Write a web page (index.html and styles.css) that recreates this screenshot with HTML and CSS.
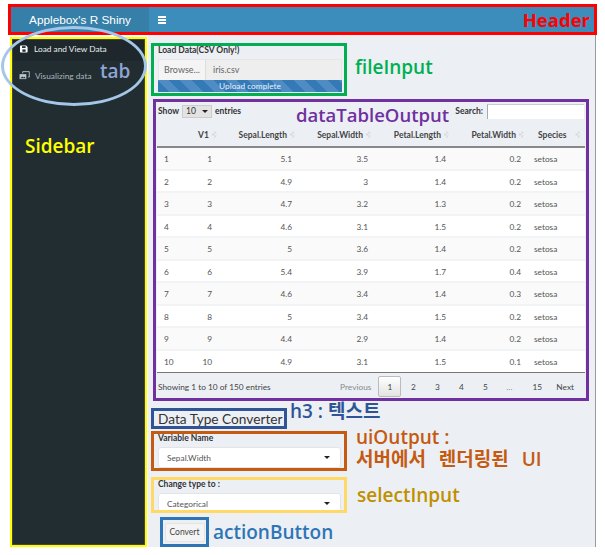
FILE: index.html
```html
<!DOCTYPE html>
<html lang="en">
<head>
    <meta charset="UTF-8">
    <title>Applebox's R Shiny</title>
    <link rel="stylesheet" href="styles.css">
</head>
<body>
    <div class="frame">
        <!-- Header -->
        <header class="header">
            <div class="logo">Applebox's R Shiny</div>
            <div class="toggle"><span></span><span></span><span></span></div>
            <div class="note note-header">Header</div>
        </header>

        <div class="columns">
            <!-- Sidebar -->
            <aside class="sidebar">
                <a class="tab tab-active">
                    <svg class="tab-icon" viewBox="0 0 10 10"><path d="M1 0.5h6.6l1.900 1.900v6.100a1 1 0 0 1-1 1h-7.500a1 1 0 0 1-1-1v-7a1 1 0 0 1 1-1z" fill="#fff"/><rect x="2.500" y="1.500" width="4.500" height="2.200" fill="#222d32"/><rect x="3" y="5.500" width="4" height="3" fill="#222d32"/></svg>
                    Load and View Data
                </a>
                <a class="tab tab-dim">
                    <svg class="tab-icon tab-icon-wide" viewBox="0 0 12 10"><path d="M4 0.700h7.300v6h-1.300M4 0.700v2" fill="none" stroke="#b8c7ce" stroke-width="1"/><rect x="0.500" y="3.500" width="7.500" height="5.500" fill="#b8c7ce"/><path d="M1.500 8l2-2 1.500 1.200 1.200-.8 1 1.600z" fill="#222d32"/></svg>
                    Visualizing data
                </a>
                <div class="note note-sidebar">Sidebar</div>
                <div class="tab-ring"></div>
                <div class="note note-tab">tab</div>
            </aside>

            <!-- Main content -->
            <main class="content">
                <div class="with-note">
                    <section class="box box-file">
                        <label class="field-label">Load Data(CSV Only!)</label>
                        <div class="file-group">
                            <span class="browse">Browse...</span>
                            <span class="file-name">iris.csv</span>
                        </div>
                        <div class="progress">Upload complete</div>
                    </section>
                    <div class="note note-file">fileInput</div>
                </div>

                <section class="box box-table">
                    <div class="note note-table">dataTableOutput</div>
                    <div class="table-top">
                        <div class="length">Show <span class="length-select">10<i class="caret caret-small"></i></span> entries</div>
                        <div class="search">Search: <span class="search-input"></span></div>
                    </div>
                    <table class="data">
                        <colgroup>
                            <col class="c-row"><col class="c-v1"><col class="c-sl"><col class="c-sw"><col class="c-pl"><col class="c-pw"><col class="c-sp">
                        </colgroup>
                        <thead>
                            <tr>
                                <th></th>
                                <th>V1<i class="sort"></i></th>
                                <th>Sepal.Length<i class="sort"></i></th>
                                <th>Sepal.Width<i class="sort"></i></th>
                                <th>Petal.Length<i class="sort"></i></th>
                                <th>Petal.Width<i class="sort"></i></th>
                                <th class="species">Species<i class="sort sort-far"></i></th>
                            </tr>
                        </thead>
                        <tbody>
                            <tr><td>1</td><td>1</td><td>5.1</td><td>3.5</td><td>1.4</td><td>0.2</td><td>setosa</td></tr>
                            <tr><td>2</td><td>2</td><td>4.9</td><td>3</td><td>1.4</td><td>0.2</td><td>setosa</td></tr>
                            <tr><td>3</td><td>3</td><td>4.7</td><td>3.2</td><td>1.3</td><td>0.2</td><td>setosa</td></tr>
                            <tr><td>4</td><td>4</td><td>4.6</td><td>3.1</td><td>1.5</td><td>0.2</td><td>setosa</td></tr>
                            <tr><td>5</td><td>5</td><td>5</td><td>3.6</td><td>1.4</td><td>0.2</td><td>setosa</td></tr>
                            <tr><td>6</td><td>6</td><td>5.4</td><td>3.9</td><td>1.7</td><td>0.4</td><td>setosa</td></tr>
                            <tr><td>7</td><td>7</td><td>4.6</td><td>3.4</td><td>1.4</td><td>0.3</td><td>setosa</td></tr>
                            <tr><td>8</td><td>8</td><td>5</td><td>3.4</td><td>1.5</td><td>0.2</td><td>setosa</td></tr>
                            <tr><td>9</td><td>9</td><td>4.4</td><td>2.9</td><td>1.4</td><td>0.2</td><td>setosa</td></tr>
                            <tr><td>10</td><td>10</td><td>4.9</td><td>3.1</td><td>1.5</td><td>0.1</td><td>setosa</td></tr>
                        </tbody>
                    </table>
                    <div class="table-bottom">
                        <div class="info">Showing 1 to 10 of 150 entries</div>
                        <div class="pager">
                            <span class="page page-text page-dim">Previous</span>
                            <span class="page page-current">1</span>
                            <span class="page">2</span>
                            <span class="page">3</span>
                            <span class="page">4</span>
                            <span class="page">5</span>
                            <span class="page page-dim">…</span>
                            <span class="page page-last">15</span>
                            <span class="page page-text">Next</span>
                        </div>
                    </div>
                </section>

                <div class="with-note with-note-h3">
                    <h3 class="box box-h3">Data Type Converter</h3>
                    <div class="note note-h3">h3 : 텍스트</div>
                </div>

                <div class="with-note with-note-ui">
                    <section class="box box-ui">
                        <label class="field-label">Variable Name</label>
                        <div class="select">Sepal.Width<i class="caret"></i></div>
                    </section>
                    <div class="note-ui">
                        <div class="note">uiOutput :</div>
                        <div class="note note-ui-ko">서버에서 렌더링된 UI</div>
                    </div>
                </div>

                <div class="with-note with-note-select">
                    <section class="box box-select">
                        <label class="field-label">Change type to :</label>
                        <div class="select">Categorical<i class="caret"></i></div>
                    </section>
                    <div class="note note-select">selectInput</div>
                </div>

                <div class="with-note with-note-action">
                    <div class="box box-action"><button class="convert">Convert</button></div>
                    <div class="note note-action">actionButton</div>
                </div>
            </main>
        </div>
    </div>
</body>
</html>
```

FILE: styles.css
```css
body {
    margin: 0;
    background-color: #fff;
    font-family: Lato, "Noto Sans CJK KR", sans-serif;
    color: #444;
}
.frame {
    width: 589px;
    margin: 4px 0 0 8px;
}

/* Header */
.header {
    display: flex;
    align-items: center;
    box-sizing: border-box;
    height: 31px;
    border: 3px solid #f00;
    background-color: #3c8dbc;
}
.logo {
    width: 138px;
    height: 100%;
    line-height: 26px;
    text-align: center;
    font-family: "Liberation Sans", sans-serif;
    font-size: 11.800px;
    color: #fff;
    background-color: #367fa9;
}
.toggle {
    display: flex;
    flex-direction: column;
    gap: 1px;
    width: 8px;
    margin-left: 9px;
}
.toggle span {
    height: 2px;
    background-color: #fff;
}

.note {
    font-family: "Open Sans", "Noto Sans CJK KR", sans-serif;
    font-weight: 600;
    font-size: 19px;
    line-height: 22px;
    white-space: nowrap;
}
.note-header {
    margin-left: auto;
    margin-right: 4px;
    color: #f00;
    font-weight: 700;
    font-size: 18.500px;
}

.columns {
    display: flex;
}

/* Sidebar */
.sidebar {
    position: relative;
    box-sizing: border-box;
    width: 137px;
    height: 510px;
    margin: 2px 1px 0 2px;
    border: 3px solid #ff0;
    outline: 1px solid #444;
    outline-offset: -3px;
    background-color: #222d32;
}
.tab {
    display: flex;
    align-items: center;
    gap: 5px;
    font-size: 8.300px;
    color: #e8eef0;
}
.tab-active {
    box-sizing: border-box;
    height: 21px;
    padding: 0 0 3px 7px;
    gap: 6px;
    background-color: #1e282c;
}
.tab-dim {
    height: 29px;
    padding-left: 6px;
    color: #a9b7bd;
}
.tab-icon {
    width: 8px;
    height: 8px;
}
.tab-icon-wide {
    width: 11px;
    height: 9px;
}
.tab-ring {
    position: absolute;
    left: -12px;
    top: -14px;
    width: 146px;
    height: 80px;
    box-sizing: border-box;
    border: 3px solid #a4c6e8;
    border-radius: 50%;
}
.note-tab {
    position: absolute;
    left: 87px;
    top: 20px;
    color: #8ea6d6;
}
.note-sidebar {
    margin: 45px 0 0 12px;
    color: #ff0;
}

/* Main content */
.content {
    box-sizing: border-box;
    width: 448px;
    height: 512px;
    padding: 8px 0 0 3px;
    background-color: #ecf0f5;
    border-right: 1px solid #999;
}
.with-note {
    display: flex;
}
.box {
    box-sizing: border-box;
    border: 3px solid;
}
.field-label {
    display: block;
    font-weight: 700;
    font-size: 8.500px;
    line-height: 8px;
    color: #333;
}

/* fileInput */
.box-file {
    width: 196px;
    height: 53px;
    padding: 0 2px 0 4px;
    border-color: #00b050;
}
.file-group {
    display: flex;
    box-sizing: border-box;
    height: 21px;
    margin-top: 5px;
    line-height: 20px;
    font-size: 9px;
    color: #666;
    border: 1px solid #e6e6e6;
    border-bottom: 0;
}
.browse {
    width: 46px;
    text-align: center;
    background-color: #f4f4f4;
    border-right: 1px solid #ddd;
}
.file-name {
    flex: 1;
    padding-left: 7px;
    background-color: #eeeeee;
}
.progress {
    height: 12px;
    line-height: 12px;
    text-align: center;
    font-size: 8.300px;
    color: #e8f0f8;
    background: repeating-linear-gradient(45deg, #337ab7 0 8px, #4f8cc4 8px 16px);
}
.note-file {
    margin: 13px 0 0 8px;
    color: #00b050;
}

/* dataTableOutput */
.box-table {
    position: relative;
    width: 436px;
    height: 302px;
    margin: 3px 0 0 2px;
    padding: 0 2px 0 1px;
    border-color: #7030a0;
    font-size: 8.300px;
}
.note-table {
    position: absolute;
    left: 140px;
    top: 2px;
    color: #7030a0;
    font-size: 18.500px;
}
.table-top {
    display: flex;
    justify-content: space-between;
    align-items: center;
    height: 18px;
    font-size: 8.500px;
    font-weight: 700;
    color: #333;
}
.length {
    display: flex;
    align-items: center;
    gap: 3px;
    padding-left: 1px;
}
.length-select {
    display: flex;
    align-items: center;
    justify-content: space-between;
    box-sizing: border-box;
    width: 30px;
    height: 13px;
    padding: 0 3px;
    font-weight: 400;
    background-color: #e3e3e3;
    border: 1px solid #ccc;
}
.search {
    display: flex;
    align-items: center;
    gap: 4px;
}
.search-input {
    width: 96px;
    height: 14px;
    background-color: #fff;
    border-left: 1px solid #aaa;
    border-top: 1px solid #ccc;
}
.caret {
    display: inline-block;
    border-left: 3.500px solid transparent;
    border-right: 3.500px solid transparent;
    border-top: 3.500px solid #222;
}
.caret-small {
    border-left-width: 3px;
    border-right-width: 3px;
    border-top-width: 3px;
}
.data {
    width: 428px;
    margin-top: 3px;
    table-layout: fixed;
    border-collapse: separate;
    border-spacing: 0;
    color: #555;
}
.c-row { width: 41px; }
.c-v1 { width: 22px; }
.c-sl { width: 80px; }
.c-sw { width: 76px; }
.c-pl { width: 78px; }
.c-pw { width: 75px; }
.c-sp { width: 56px; }
.data th {
    box-sizing: border-box;
    height: 25px;
    padding: 0 5px 0 0;
    text-align: right;
    font-size: 8.500px;
    font-weight: 700;
    color: #444;
    white-space: nowrap;
    border-bottom: 2px solid #888;
}
.data th.species {
    padding-left: 9px;
    text-align: left;
}
.sort {
    display: inline-block;
    width: 5px;
    height: 8px;
    margin-left: 3px;
    vertical-align: -1px;
    background-color: #d5d9de;
    clip-path: polygon(50% 0, 100% 37%, 0 37%, 0 63%, 100% 63%, 50% 100%);
}
.sort-far {
    margin-left: 9px;
}
.data td {
    box-sizing: border-box;
    height: 22.500px;
    padding: 2px 8px 0 0;
    text-align: right;
    background-color: #fff;
    border-bottom: 2px solid #f2f3f5;
}
.data tbody tr:nth-child(odd) td {
    background-color: #fafafa;
}
.data td:first-child {
    padding-left: 7px;
    text-align: left;
}
.data td:last-child {
    padding-left: 5px;
    text-align: left;
}
.data tbody tr:last-child td {
    border-bottom: 1px solid #777;
}
.table-bottom {
    display: flex;
    justify-content: space-between;
    align-items: center;
    height: 27px;
}
.info {
    padding-left: 1px;
    color: #444;
}
.pager {
    display: flex;
    align-items: center;
    padding-right: 3px;
}
.page {
    width: 24px;
    text-align: center;
    line-height: 20px;
    color: #444;
}
.page-text {
    width: auto;
    padding: 0 7px;
}
.page-dim {
    color: #888;
}
.page-last {
    margin-left: 4px;
}
.page-current {
    box-sizing: border-box;
    width: 23px;
    height: 21px;
    border: 1px solid #bbb;
    border-radius: 2px;
    background: linear-gradient(to bottom, #fff, #e2e2e2);
}

/* h3 */
.with-note-h3 {
    margin-top: 7px;
}
.box-h3 {
    width: 136px;
    height: 21px;
    margin: 0;
    padding-left: 4px;
    border-color: #2f5597;
    font-weight: 400;
    font-size: 13.700px;
    line-height: 15px;
    color: #333;
    white-space: nowrap;
}
.note-h3 {
    margin: -8px 0 0 3px;
    color: #2f5597;
}

/* uiOutput */
.with-note-ui {
    height: 44px;
    margin-top: 2px;
}
.box-ui {
    width: 196px;
    height: 40px;
    padding: 0 2px 0 4px;
    border-color: #c55a11;
}
.select {
    display: flex;
    align-items: center;
    justify-content: space-between;
    box-sizing: border-box;
    width: 183px;
    height: 21px;
    margin-top: 5px;
    padding: 0 10px 0 8px;
    font-size: 8.300px;
    color: #555;
    background-color: #fff;
    border: 1px solid #e4e4e4;
    border-radius: 3px;
}
.note-ui {
    margin: -5px 0 0 9px;
    color: #c55a11;
}
.note-ui-ko {
    word-spacing: 8px;
}

/* selectInput */
.with-note-select {
    height: 40px;
    margin-top: 2px;
}
.box-select {
    width: 196px;
    height: 36px;
    padding: 0 2px 0 4px;
    border-color: #ffd966;
    overflow: hidden;
}
.note-select {
    margin: 7px 0 0 10px;
    color: #bf9000;
}

/* actionButton */
.with-note-action {
    margin-left: 9px;
}
.box-action {
    display: flex;
    align-items: center;
    justify-content: center;
    width: 49px;
    height: 30px;
    border-color: #2e75b6;
}
.convert {
    width: 40px;
    height: 19px;
    padding: 0;
    font-family: inherit;
    font-size: 8.500px;
    color: #444;
    background-color: #f4f4f4;
    border: 1px solid #e4e4e4;
    border-radius: 2px;
}
.note-action {
    margin: 4px 0 0 4px;
    color: #2e75b6;
}
```
